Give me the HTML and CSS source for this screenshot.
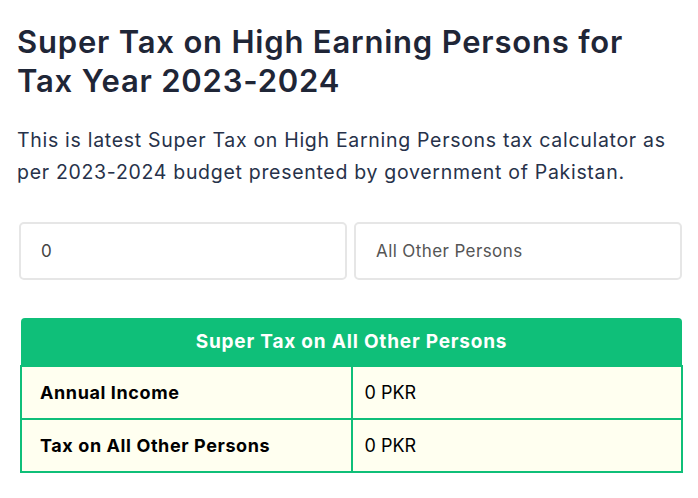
FILE: index.html
```html
<!DOCTYPE html>
<html lang="en">
<head>
    <meta charset="UTF-8">
    <meta name="viewport" content="width=device-width, initial-scale=1.0">
    <title>Super Tax Calculator 2023-2024</title>
    <link rel="stylesheet" href="styles.css">
</head>
<body>
    <div class="container">
        <h1 class="title">Super Tax on High Earning Persons for Tax Year 2023-2024</h1>
        <p class="intro">This is latest Super Tax on High Earning Persons tax calculator as per 2023-2024 budget presented by government of Pakistan.</p>
        <div class="inputs">
            <input class="field" type="text" value="0">
            <input class="field" type="text" placeholder="All Other Persons">
        </div>
        <table class="result">
            <thead>
                <tr><th colspan="2">Super Tax on All Other Persons</th></tr>
            </thead>
            <tbody>
                <tr>
                    <td class="label">Annual Income</td>
                    <td class="value">0 PKR</td>
                </tr>
                <tr>
                    <td class="label">Tax on All Other Persons</td>
                    <td class="value">0 PKR</td>
                </tr>
            </tbody>
        </table>
    </div>
</body>
</html>
```

FILE: styles.css
```css
body {
    font-family: 'Inter', 'Noto Sans', sans-serif;
    margin: 0;
    background: #fff;
    color: #1e293b;
}
.container {
    padding: 0 16px 0 17px;
}
.title {
    font-size: 31px;
    font-weight: 600;
    line-height: 39px;
    color: #1f2637;
    margin: 22px 0 0;
    letter-spacing: 0.8px;
}
.intro {
    font-size: 19.5px;
    font-weight: 400;
    line-height: 32px;
    color: #27324a;
    margin: 24px 0 0;
    letter-spacing: 0.7px;
}
.inputs {
    display: flex;
    gap: 7px;
    margin: 34px 0 0 2px;
}
.field {
    flex: 1;
    min-width: 0;
    height: 58px;
    box-sizing: border-box;
    border: 2px solid #e6e6e6;
    border-radius: 5px;
    padding: 0 20px;
    font-family: inherit;
    font-size: 17px;
    letter-spacing: 0.4px;
    color: #444;
    background: #fff;
}
.field::placeholder {
    color: #555;
}
.result {
    width: calc(100% - 2px);
    margin: 38px 0 0 3px;
    border-collapse: collapse;
    font-size: 18px;
}
.result th {
    background: #0fbf79;
    color: #fff;
    font-weight: 700;
    font-size: 19px;
    letter-spacing: 0.8px;
    height: 47px;
    padding: 0;
    border-radius: 4px 4px 0 0;
}
.result td {
    background: #fffff0;
    border: 2px solid #0fbf79;
    height: 51px;
    padding: 0 18px;
    color: #000;
}
.result td.label {
    width: 50%;
    font-weight: 700;
    letter-spacing: 0.6px;
}
.result td.value {
    padding-left: 12px;
    font-size: 18px;
}
```
